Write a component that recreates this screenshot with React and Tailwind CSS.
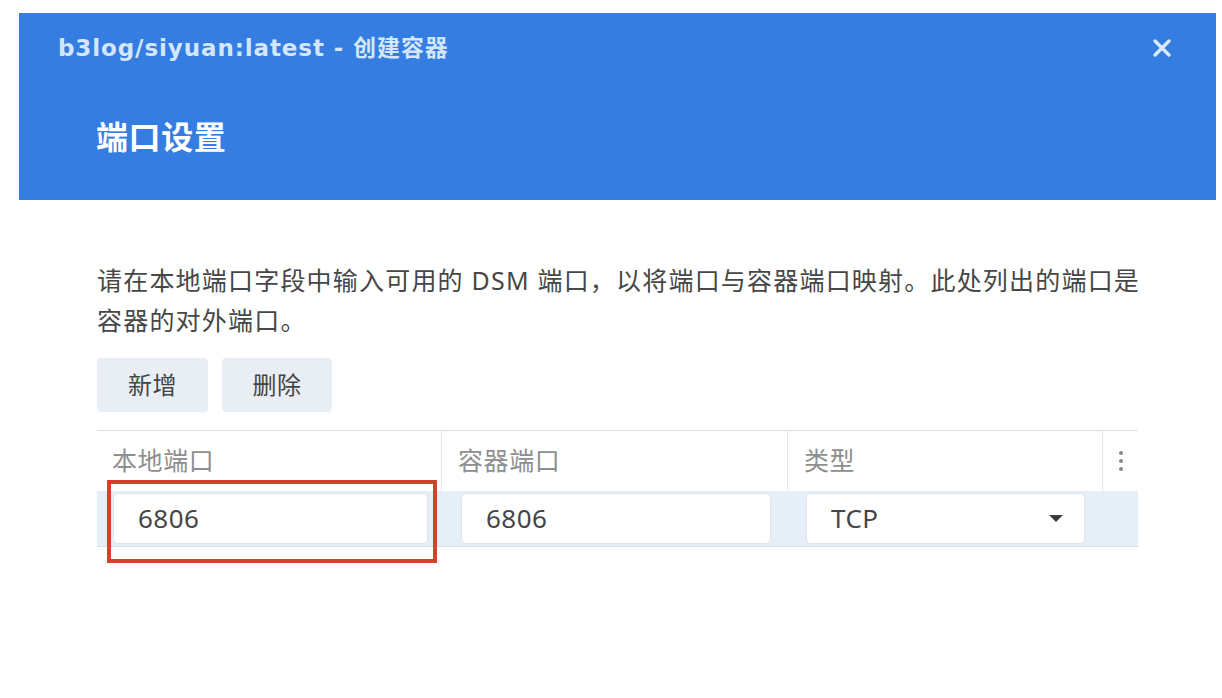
import React from "react";

const cjk = { fontFamily: '"Noto Sans", "Noto Sans CJK SC", sans-serif' };

function Field({ value }) {
  return (
    <div className="h-[51px] bg-white rounded-[5px] border border-[#dfe4ea] flex items-center pl-[24px] text-[26px] tracking-[0.5px] text-[#454545]">
      {value}
    </div>
  );
}

export default function App() {
  return (
    <div className="w-[1222px] h-[698px] bg-white relative overflow-hidden" style={cjk}>
      <div className="ml-[19px] mt-[13px] w-[1197px] h-[187px] bg-[#357de1]">
        <div className="h-[70px] flex items-center justify-between pl-[39px] pr-[44px]">
          <span
            className="text-[23px] font-bold text-[#d3e6fb] tracking-[0.9px]"
            style={{ fontFamily: '"DejaVu Sans", "Noto Sans CJK SC", sans-serif' }}
          >
            b3log/siyuan:latest - 创建容器
          </span>
          <svg width="20" height="20" viewBox="0 0 20 20">
            <path d="M3 3 L17 17 M17 3 L3 17" stroke="#dbeafc" strokeWidth="3.4" strokeLinecap="round" />
          </svg>
        </div>
        <div className="mt-[34px] h-[40px] flex items-center pl-[77px] text-[32px] tracking-[0.6px] font-bold text-white leading-none">
          端口设置
        </div>
      </div>

      <div className="pl-[97px] w-[1145px]">
        <p className="mt-[60px] text-[25px] leading-[40px] text-[#474747] tracking-[1.2px]">
          请在本地端口字段中输入可用的 DSM 端口，以将端口与容器端口映射。此处列出的端口是容器的对外端口。
        </p>

        <div className="mt-[18px] flex gap-[14px]">
          <button className="w-[111px] h-[54px] bg-[#e9eef4] rounded-[4px] text-[24px] tracking-[0.5px] text-[#444]">新增</button>
          <button className="w-[110px] h-[54px] bg-[#e9eef4] rounded-[4px] text-[24px] tracking-[0.5px] text-[#444]">删除</button>
        </div>

        <div className="mt-[18px] w-[1041px] border-t border-[#dcdfe3]">
          <div className="h-[60px] flex text-[25px] tracking-[0.6px] text-[#8e8e8e]">
            <div className="w-[345px] flex items-center pl-[15px] border-r border-[#e3e6ea]">本地端口</div>
            <div className="w-[346px] flex items-center pl-[16px] border-r border-[#e3e6ea]">容器端口</div>
            <div className="w-[315px] flex items-center pl-[16px] border-r border-[#e3e6ea]">类型</div>
            <div className="flex-1 flex items-center justify-center">
              <svg width="6" height="22" viewBox="0 0 6 22">
                <circle cx="3" cy="3" r="2" fill="#8a8a8a" />
                <circle cx="3" cy="11" r="2" fill="#8a8a8a" />
                <circle cx="3" cy="19" r="2" fill="#8a8a8a" />
              </svg>
            </div>
          </div>
          <div className="h-[56px] flex items-center bg-[#e6eef8] border-b border-[#d9dde2]">
            <div className="w-[345px] pl-[16px] pr-[14px]"><Field value="6806" /></div>
            <div className="w-[346px] pl-[19px] pr-[17px]"><Field value="6806" /></div>
            <div className="w-[315px] pl-[18px] pr-[18px]">
              <div className="h-[51px] bg-white rounded-[5px] border border-[#dfe4ea] flex items-center justify-between pl-[24px] pr-[20px] text-[26px] tracking-[0.5px] text-[#454545]">
                <span>TCP</span>
                <svg width="16" height="9" viewBox="0 0 16 9">
                  <path d="M1 1 L15 1 L8 8 Z" fill="#3d3d3d" />
                </svg>
              </div>
            </div>
          </div>
        </div>
      </div>

      <div className="absolute left-[107px] top-[480px] w-[330px] h-[83px] border-[4px] border-[#d3432b]" />
    </div>
  );
}
